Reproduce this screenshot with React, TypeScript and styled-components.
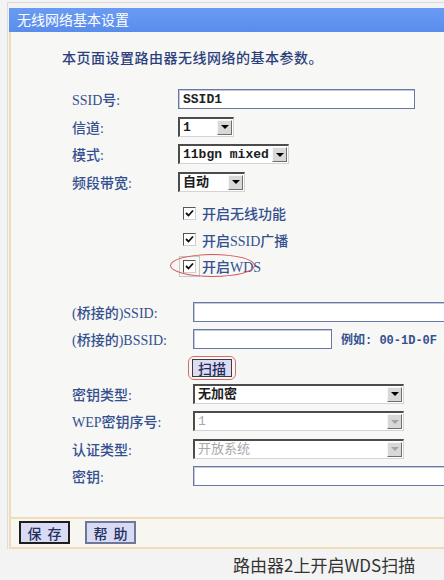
import React from 'react';
import styled, { createGlobalStyle } from 'styled-components';

const GlobalStyle = createGlobalStyle`
  html, body {
    margin: 0;
    padding: 0;
    background: #f3f3f3;
  }
  body {
    font-family: "Liberation Serif", "Noto Sans CJK SC", serif;
  }
`;

const valueFont = `"Liberation Mono", "Noto Sans CJK SC", monospace`;

const Page = styled.div`
  width: 444px;
  height: 580px;
  overflow: hidden;
  box-sizing: border-box;
  padding: 2px 0 0 7px;
`;

const Frame = styled.div`
  width: 470px;
  border-top: 1px solid #dcdcdc;
  border-left: 1px solid #dcdcdc;
  padding: 5px 0 0 1px;
`;

const TitleBar = styled.div`
  height: 24px;
  background: linear-gradient(#6a9bf3, #5a8cec);
  color: #fff;
  font-size: 14px;
  line-height: 22px;
  padding-left: 8px;
  font-family: "Noto Sans CJK SC", sans-serif;
`;

const Body = styled.div`
  border-left: 2px solid #f0dcb6;
  background: #f7f7f5;
  padding: 15px 0 31px 51px;
`;

const Intro = styled.div`
  font-size: 14px;
  line-height: 20px;
  font-weight: 500;
  letter-spacing: 0.5px;
  color: #2c3f7c;
  font-family: "Noto Sans CJK SC", sans-serif;
`;

const FieldList = styled.div<{ $gap: number; $top: number }>`
  display: flex;
  flex-direction: column;
  gap: ${p => p.$gap}px;
  margin: ${p => p.$top}px 0 0 10px;
`;

const FieldRow = styled.div<{ $labelWidth: number }>`
  display: grid;
  grid-template-columns: ${p => p.$labelWidth}px auto;
  align-items: center;
  height: 20px;
`;

const Label = styled.span`
  font-size: 14px;
  font-weight: 500;
  color: #34508f;
  white-space: nowrap;
`;

const Cell = styled.div`
  display: flex;
  align-items: center;
  gap: 9px;
`;

const TextInput = styled.input<{ $width: number }>`
  width: ${p => p.$width}px;
  height: 20px;
  box-sizing: border-box;
  border: 1px solid #6b78a4;
  box-shadow: inset 1px 1px 0 #c3c9dd;
  background: #fff;
  padding: 0 4px;
  margin: 0;
  font-family: ${valueFont};
  font-size: 13px;
  font-weight: bold;
  color: #222;
  outline: none;
`;

const SelectBox = styled.div<{ $width: number; $disabled?: boolean }>`
  width: ${p => p.$width}px;
  height: 20px;
  box-sizing: border-box;
  display: flex;
  align-items: center;
  background: #fff;
  border-top: 2px solid #4c4c4c;
  border-left: 2px solid #4c4c4c;
  border-right: 1px solid #d4d4d4;
  border-bottom: 1px solid #d4d4d4;
  color: ${p => (p.$disabled ? '#a9a9a9' : '#1d1d1d')};
`;

const SelectValue = styled.span<{ $bold?: boolean }>`
  flex: 1;
  padding-left: 3px;
  font-family: ${valueFont};
  font-size: 13px;
  line-height: 17px;
  font-weight: ${p => (p.$bold ? 'bold' : 'normal')};
  white-space: nowrap;
  overflow: hidden;
`;

const ArrowButton = styled.span<{ $disabled?: boolean }>`
  width: 15px;
  height: 15px;
  box-sizing: border-box;
  margin-right: 1px;
  background: #d8d8d8;
  border: 1px solid;
  border-color: #f6f6f6 #6e6e6e #6e6e6e #f6f6f6;
  display: flex;
  align-items: center;
  justify-content: center;

  &::after {
    content: '';
    border-left: 4px solid transparent;
    border-right: 4px solid transparent;
    border-top: 4px solid ${p => (p.$disabled ? '#a4a4a4' : '#000')};
  }
`;

const CheckList = styled.div`
  display: flex;
  flex-direction: column;
  gap: 6.5px;
  margin: 11.5px 0 0 121px;
`;

const CheckRow = styled.label`
  position: relative;
  display: flex;
  align-items: center;
  gap: 6px;
  height: 20px;
  font-size: 14px;
  font-weight: 500;
  color: #34508f;
`;

const CheckBox = styled.span<{ $focused?: boolean }>`
  width: 13px;
  height: 13px;
  box-sizing: border-box;
  background: #fff;
  border: 1px solid;
  border-color: #555 #cfcfcf #cfcfcf #555;
  display: flex;
  align-items: center;
  justify-content: center;
  outline: ${p => (p.$focused ? '1px solid #c8c8c8' : 'none')};
  outline-offset: 3px;
`;

const Ellipse = styled.span`
  position: absolute;
  left: -13px;
  top: -2px;
  width: 85px;
  height: 23px;
  box-sizing: border-box;
  border: 1px solid #d65454;
  border-radius: 50%;
  pointer-events: none;
`;

const ScanFrame = styled.div`
  display: inline-flex;
  margin: -1px 0 -1px -5px;
  padding: 2px 3px;
  border: 1px solid #d86a6a;
  border-radius: 6px;
  width: max-content;
`;

const ScanButton = styled.button`
  height: 18px;
  padding: 0 5px;
  margin: 0;
  border: 1px solid #3c3c3c;
  background: #dcdcf2;
  font-family: "Noto Sans CJK SC", sans-serif;
  font-size: 14px;
  font-weight: 500;
  line-height: 14px;
  color: #1f2b5a;
`;

const Hint = styled.span`
  font-family: ${valueFont};
  font-size: 12px;
  font-weight: bold;
  color: #34508f;
  white-space: nowrap;
`;

const Footer = styled.div`
  display: flex;
  align-items: center;
  gap: 15px;
  height: 28px;
  padding-left: 8px;
  border-top: 2px solid #f0dcb6;
  border-bottom: 2px solid #f0dcb6;
  border-left: 2px solid #f0dcb6;
  background: #f8f6f0;
`;

const FooterButton = styled.button<{ $strong?: boolean }>`
  width: 51px;
  height: 23px;
  margin: 0;
  padding: 0;
  box-sizing: border-box;
  background: #d9dbf5;
  border: ${p => (p.$strong ? '2px solid #1e1e1e' : '2px solid #6c7799')};
  font-family: "Noto Sans CJK SC", sans-serif;
  font-size: 14px;
  font-weight: 500;
  letter-spacing: 6px;
  text-indent: 6px;
  color: #23305e;
`;

const Caption = styled.div`
  margin-top: 5px;
  padding-left: 226px;
  font-family: "Noto Sans CJK SC", sans-serif;
  font-size: 17px;
  line-height: 22px;
  color: #333;
`;

const Check = () => (
  <svg width="9" height="9" viewBox="0 0 9 9">
    <path d="M1 4 L3.5 6.5 L8 1.5" fill="none" stroke="#111" strokeWidth="1.8" />
  </svg>
);

const Select: React.FC<{ width: number; value: string; disabled?: boolean; bold?: boolean }> = ({
  width,
  value,
  disabled,
  bold,
}) => (
  <SelectBox $width={width} $disabled={disabled}>
    <SelectValue $bold={bold}>{value}</SelectValue>
    <ArrowButton $disabled={disabled} />
  </SelectBox>
);

export default function App() {
  return (
    <Page>
      <GlobalStyle />
      <Frame>
        <TitleBar>无线网络基本设置</TitleBar>
        <Body>
          <Intro>本页面设置路由器无线网络的基本参数。</Intro>

          <FieldList $gap={7.5} $top={22}>
            <FieldRow $labelWidth={106}>
              <Label>SSID号:</Label>
              <TextInput $width={237} defaultValue="SSID1" readOnly />
            </FieldRow>
            <FieldRow $labelWidth={106}>
              <Label>信道:</Label>
              <Select width={56} value="1" bold />
            </FieldRow>
            <FieldRow $labelWidth={106}>
              <Label>模式:</Label>
              <Select width={111} value="11bgn mixed" bold />
            </FieldRow>
            <FieldRow $labelWidth={106}>
              <Label>频段带宽:</Label>
              <Select width={67} value="自动" bold />
            </FieldRow>
          </FieldList>

          <CheckList>
            <CheckRow>
              <CheckBox><Check /></CheckBox>
              开启无线功能
            </CheckRow>
            <CheckRow>
              <CheckBox><Check /></CheckBox>
              开启SSID广播
            </CheckRow>
            <CheckRow>
              <CheckBox $focused><Check /></CheckBox>
              开启WDS
              <Ellipse />
            </CheckRow>
          </CheckList>

          <FieldList $gap={7.33} $top={26}>
            <FieldRow $labelWidth={121}>
              <Label>(桥接的)SSID:</Label>
              <TextInput $width={270} readOnly />
            </FieldRow>
            <FieldRow $labelWidth={121}>
              <Label>(桥接的)BSSID:</Label>
              <Cell>
                <TextInput $width={139} readOnly />
                <Hint>例如: 00-1D-0F</Hint>
              </Cell>
            </FieldRow>
            <FieldRow $labelWidth={121}>
              <span />
              <ScanFrame>
                <ScanButton>扫描</ScanButton>
              </ScanFrame>
            </FieldRow>
            <FieldRow $labelWidth={121}>
              <Label>密钥类型:</Label>
              <Select width={211} value="无加密" bold />
            </FieldRow>
            <FieldRow $labelWidth={121}>
              <Label>WEP密钥序号:</Label>
              <Select width={211} value="1" disabled />
            </FieldRow>
            <FieldRow $labelWidth={121}>
              <Label>认证类型:</Label>
              <Select width={211} value="开放系统" disabled />
            </FieldRow>
            <FieldRow $labelWidth={121}>
              <Label>密钥:</Label>
              <TextInput $width={270} readOnly />
            </FieldRow>
          </FieldList>
        </Body>
        <Footer>
          <FooterButton $strong>保存</FooterButton>
          <FooterButton>帮助</FooterButton>
        </Footer>
      </Frame>
      <Caption>路由器2上开启WDS扫描</Caption>
    </Page>
  );
}
